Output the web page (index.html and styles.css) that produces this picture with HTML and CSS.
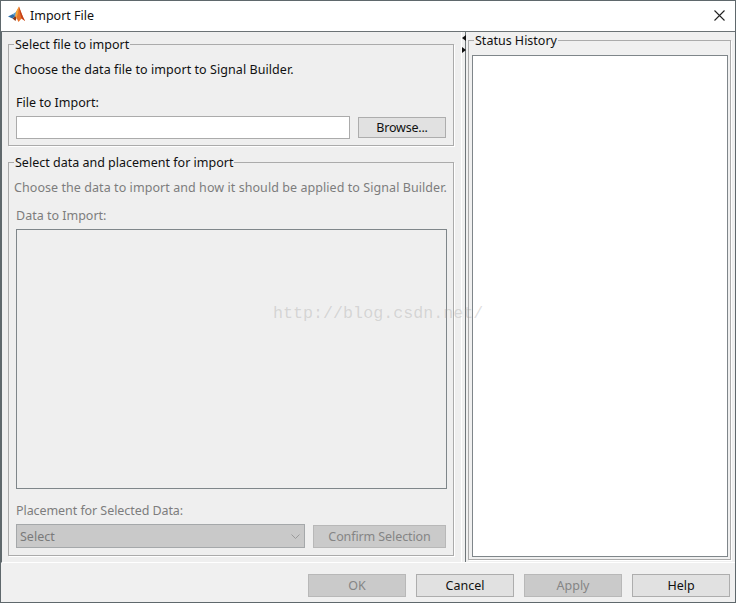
FILE: index.html
```html
<!DOCTYPE html>
<html lang="en">
<head>
<meta charset="utf-8">
<title>Import File</title>
<link rel="stylesheet" href="styles.css">
</head>
<body>
<div class="window">
  <header class="titlebar">
    <svg class="logo" width="18" height="18" viewBox="0 0 18 18">
      <path d="M0 10.5 L5 8 L7.5 10 L4.5 12.5 Z" fill="#2f6ea8"/>
      <path d="M5 8 L8 6 L7.5 10 Z" fill="#4a9bd0"/>
      <path d="M4.5 12.5 L7.5 10 L8.5 12 L7.5 15 Z" fill="#8a3a1a"/>
      <path d="M8 6 L11 0.5 L13 6 L15 11 L17 15 L13.5 12.5 L10.5 16 L8.5 12 L7.5 10 Z" fill="#e8722a"/>
      <path d="M11 0.5 L13 6 L15 11 L17 15 L13.5 12.5 L12 7 Z" fill="#c4401a"/>
      <path d="M8 6 L11 0.5 L10 7 L8.5 12 L7.5 10 Z" fill="#f4a63a"/>
    </svg>
    <span class="title-text">Import File</span>
    <svg class="close" width="11" height="11" viewBox="0 0 11 11">
      <path d="M0.5 0.5 L10.5 10.5 M10.5 0.5 L0.5 10.5" stroke="#222" stroke-width="1.1" fill="none"/>
    </svg>
  </header>
  <main class="main">
    <section class="left-pane">
      <fieldset class="group group-file">
        <legend class="legend">Select file to import</legend>
        <p class="intro">Choose the data file to import to Signal Builder.</p>
        <div class="label">File to Import:</div>
        <div class="row">
          <div class="input"></div>
          <button class="btn btn-browse">Browse...</button>
        </div>
      </fieldset>
      <fieldset class="group group-data">
        <legend class="legend">Select data and placement for import</legend>
        <p class="intro muted">Choose the data to import and how it should be applied to Signal Builder.</p>
        <div class="label muted label-data">Data to Import:</div>
        <div class="listbox"></div>
        <div class="label muted label-place">Placement for Selected Data:</div>
        <div class="row row-place">
          <div class="select">
            <span>Select</span>
            <svg width="9" height="5" viewBox="0 0 9 5"><path d="M0.5 0.5 L4.5 4.5 L8.5 0.5" stroke="#9a9a9a" fill="none"/></svg>
          </div>
          <button class="btn btn-confirm disabled">Confirm Selection</button>
        </div>
      </fieldset>
    </section>
    <div class="splitter">
      <span class="arrow arrow-left"></span>
      <span class="arrow arrow-right"></span>
    </div>
    <section class="right-pane">
      <fieldset class="group group-status">
        <legend class="legend">Status History</legend>
        <div class="status-box"></div>
      </fieldset>
    </section>
  </main>
  <footer class="footer">
    <button class="btn btn-foot disabled">OK</button>
    <button class="btn btn-foot">Cancel</button>
    <button class="btn btn-foot disabled">Apply</button>
    <button class="btn btn-foot">Help</button>
  </footer>
  <div class="watermark">http://blog.csdn.net/</div>
</div>
</body>
</html>
```

FILE: styles.css
```css
* { box-sizing: border-box; }
html, body { margin: 0; padding: 0; }
body {
  width: 736px;
  height: 603px;
  overflow: hidden;
  font-family: "Noto Sans", "Open Sans", sans-serif;
  font-size: 12.5px;
  color: #111;
}
.window {
  position: relative;
  width: 736px;
  height: 603px;
  border: 1px solid #5f686c;
  background: #f0f0f0;
  display: flex;
  flex-direction: column;
}
.titlebar {
  height: 31px;
  flex: none;
  background: #fff;
  border-bottom: 1px solid #6b7275;
  display: flex;
  align-items: center;
  padding: 0 10px 0 7px;
}
.logo { flex: none; margin-top: -2px; }
.title-text { margin-left: 4px; font-size: 12.5px; margin-top: -1px; }
.close { margin-left: auto; margin-top: -1px; }
.main {
  flex: none;
  height: 531px;
  display: flex;
  border-left: 1px solid #5f686c;
  border-bottom: 1px solid #fff;
}
.left-pane {
  flex: none;
  width: 460px;
  background: #efefef;
  border-right: 1px solid #fff;
  padding: 4px 7px 0 6px;
  display: flex;
  flex-direction: column;
  gap: 8px;
}
.group {
  margin: 0;
  min-width: 0;
  border: 1px solid #ababab;
  box-shadow: 1px 1px 0 #fff;
  padding: 0;
}
.legend {
  margin-left: 0;
  padding: 1px 1px 0;
  line-height: 16px;
  height: 16px;
  color: #111;
}
.group-file { height: 110px; flex: none; padding: 9px 6px 0 5px; }
.group-data { height: 402px; flex: none; padding: 9px 6px 0 5px; }
.intro { margin: 0; line-height: 18px; height: 18px; white-space: nowrap; letter-spacing: 0.065px; }
.label { line-height: 18px; height: 18px; margin: 15px 0 0 2px; }
.muted { color: #7d7d7d; }
.row { display: flex; margin-left: 2px; align-items: center; }
.group-file .row { margin-top: 4px; }
.input {
  width: 334px;
  height: 23px;
  background: #fff;
  border: 1px solid #ababab;
  flex: none;
}
.btn {
  font: inherit;
  color: #111;
  background: #e1e1e1;
  border: 1px solid #adadad;
  padding: 0;
  margin: 0;
  display: block;
}
.btn.disabled { background: #cacaca; color: #858585; border-color: #b8b8b8; }
.btn-browse { width: 88px; height: 21px; margin-left: 8px; letter-spacing: -0.2px; }
.label-data { margin-top: 10px; }
.listbox {
  margin: 4px 0 0 2px;
  width: 431px;
  height: 260px;
  background: #efefef;
  border: 1px solid #7f868a;
}
.label-place { margin-top: 13px; letter-spacing: -0.07px; }
.row-place { margin-top: 4px; }
.select {
  width: 289px;
  height: 24px;
  flex: none;
  background: #c9c9c9;
  border: 1px solid #a5a8aa;
  color: #7a7a7a;
  display: flex;
  align-items: center;
  justify-content: space-between;
  padding: 0 4px 0 3px;
}
.btn-confirm { width: 133px; height: 23px; margin-left: 8px; letter-spacing: -0.1px; }
.splitter {
  flex: none;
  width: 3px;
  position: relative;
}
.arrow {
  position: absolute;
  left: 0;
  width: 0;
  height: 0;
  border-style: solid;
}
.arrow-left { top: 3px; border-width: 3px 4px 3px 0; border-color: transparent #111 transparent transparent; }
.arrow-right { top: 15px; border-width: 3px 0 3px 4px; border-color: transparent transparent transparent #111; }
.right-pane {
  flex: 1;
  border-left: 1px solid #6f7679;
  padding: 0 4px 2px 2px;
  display: flex;
}
.group-status { flex: 1; padding: 7px 2px 2px 3px; display: flex; flex-direction: column; }
.group-status .legend { margin-left: 2px; }
.status-box {
  flex: 1;
  background: #fff;
  border: 1px solid #7f868a;
}
.footer {
  flex: 1;
  display: flex;
  justify-content: flex-end;
  gap: 10px;
  padding: 11px 5px 0 0;
}
.btn-foot { width: 98px; height: 23px; }
.watermark {
  position: absolute;
  left: 272px;
  top: 303px;
  font-family: "Liberation Mono", monospace;
  font-size: 16.7px;
  line-height: 20px;
  color: rgba(150, 150, 150, 0.3);
  white-space: nowrap;
  pointer-events: none;
}
```
